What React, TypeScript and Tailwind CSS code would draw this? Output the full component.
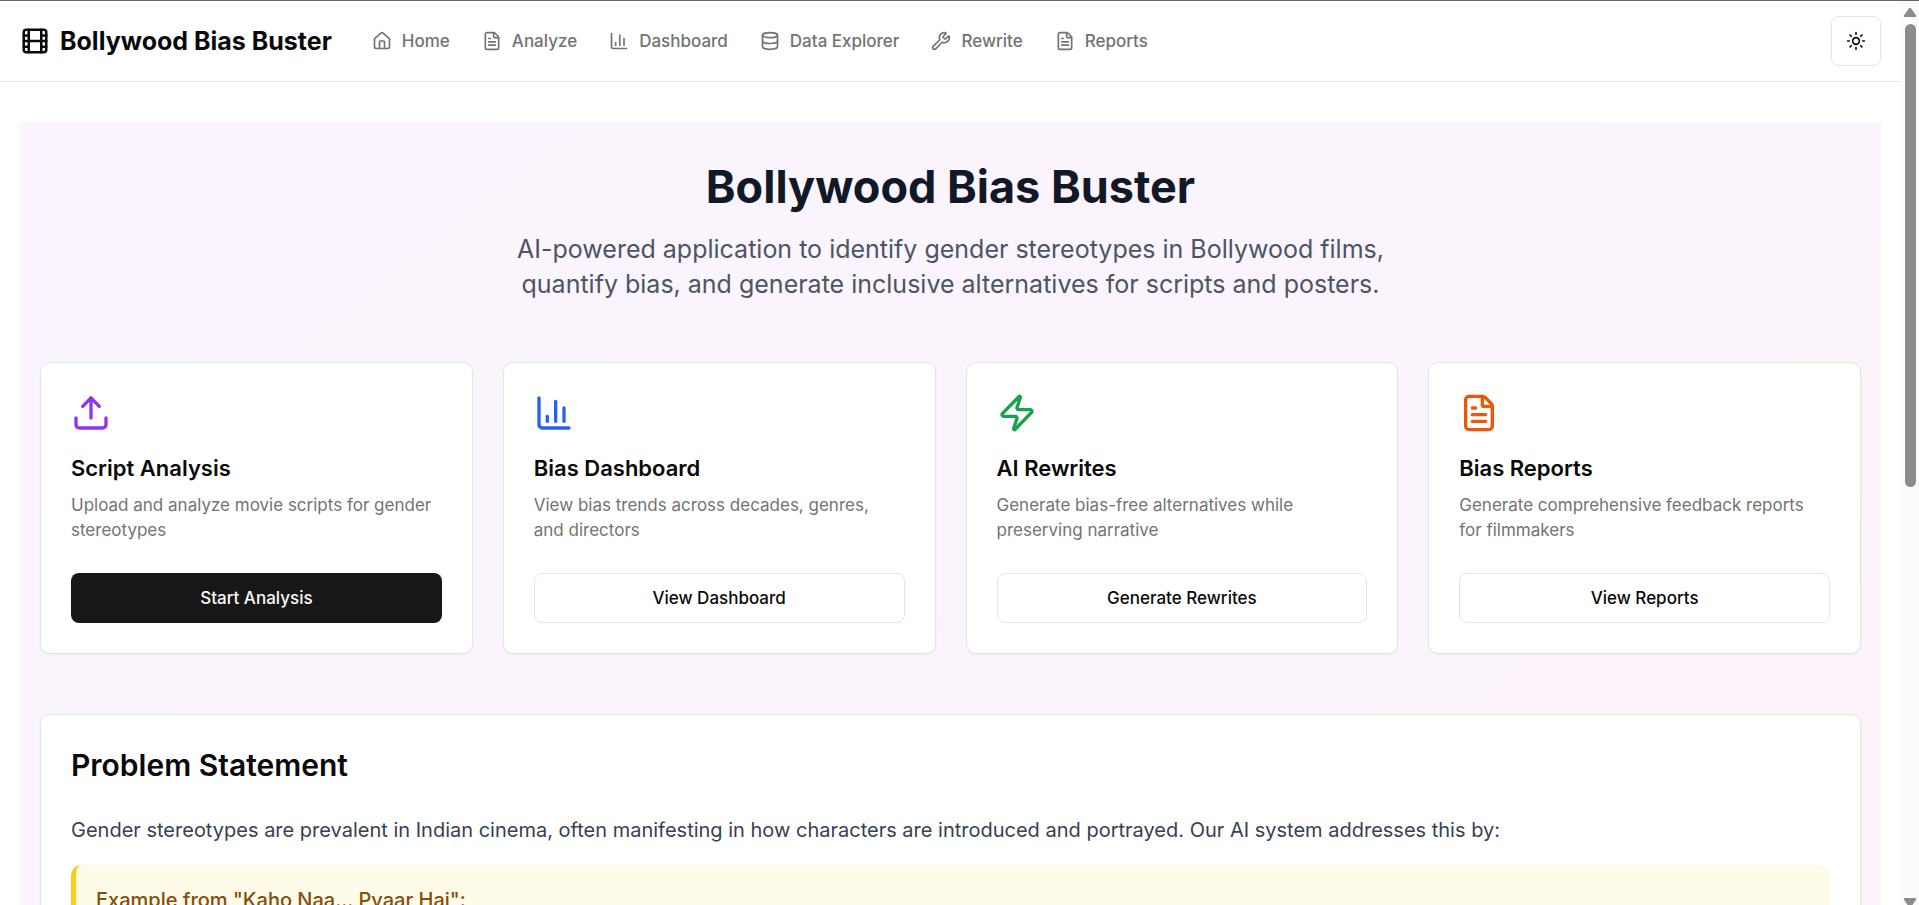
import {
  ChartColumn,
  Database,
  FileText,
  Film,
  House,
  Sun,
  Upload,
  Wrench,
  Zap,
  type LucideIcon,
} from "lucide-react";

type NavItem = { label: string; href: string; icon: LucideIcon };

const navItems: NavItem[] = [
  { label: "Home", href: "#home", icon: House },
  { label: "Analyze", href: "#analyze", icon: FileText },
  { label: "Dashboard", href: "#dashboard", icon: ChartColumn },
  { label: "Data Explorer", href: "#data", icon: Database },
  { label: "Rewrite", href: "#rewrite", icon: Wrench },
  { label: "Reports", href: "#reports", icon: FileText },
];

type Feature = {
  title: string;
  description: string;
  action: string;
  icon: LucideIcon;
  iconColor: string;
  primary?: boolean;
};

const features: Feature[] = [
  {
    title: "Script Analysis",
    description: "Upload and analyze movie scripts for gender stereotypes",
    action: "Start Analysis",
    icon: Upload,
    iconColor: "text-[#9333ea]",
    primary: true,
  },
  {
    title: "Bias Dashboard",
    description: "View bias trends across decades, genres, and directors",
    action: "View Dashboard",
    icon: ChartColumn,
    iconColor: "text-[#2563eb]",
  },
  {
    title: "AI Rewrites",
    description: "Generate bias-free alternatives while preserving narrative",
    action: "Generate Rewrites",
    icon: Zap,
    iconColor: "text-[#16a34a]",
  },
  {
    title: "Bias Reports",
    description: "Generate comprehensive feedback reports for filmmakers",
    action: "View Reports",
    icon: FileText,
    iconColor: "text-[#ea580c]",
  },
];

function Header() {
  return (
    <header className="flex h-[81px] shrink-0 items-center justify-between border-b border-[#e5e5e5] px-5">
      <div className="flex items-center gap-10">
        <a href="#home" className="flex items-center gap-2.5">
          <Film className="size-[30px]" />
          <span className="text-[25px] leading-[35px] font-bold">Bollywood Bias Buster</span>
        </a>
        <nav className="flex items-center gap-8">
          {navItems.map(({ label, href, icon: Icon }) => (
            <a
              key={label}
              href={href}
              className="flex items-center gap-2.5 text-[17px] leading-[25px] font-medium text-[#737373]"
            >
              <Icon className="size-5" />
              {label}
            </a>
          ))}
        </nav>
      </div>
      <button
        type="button"
        aria-label="Toggle theme"
        className="flex size-[50px] items-center justify-center rounded-lg border border-[#e5e5e5] bg-white"
      >
        <Sun className="size-5" />
      </button>
    </header>
  );
}

function FeatureCard({ feature }: { feature: Feature }) {
  const Icon = feature.icon;
  return (
    <article className="flex flex-col rounded-[10px] border border-[#e5e5e5] bg-white p-[30px] shadow-xs">
      <Icon className={`size-10 ${feature.iconColor}`} />
      <h3 className="mt-[18px] text-[22px] leading-[35px] font-semibold">{feature.title}</h3>
      <p className="mt-[7px] pr-2 text-[17px] leading-[25px] text-[#737373]">
        {feature.description}
      </p>
      <button
        type="button"
        className={
          feature.primary
            ? "mt-[30px] h-[50px] w-full rounded-lg bg-[#171717] text-[17px] leading-[25px] font-medium text-[#fafafa]"
            : "mt-[30px] h-[50px] w-full rounded-lg border border-[#e5e5e5] bg-white text-[17px] leading-[25px] font-medium"
        }
      >
        {feature.action}
      </button>
    </article>
  );
}

function ProblemStatement() {
  return (
    <section className="mt-[60px] rounded-[10px] border border-[#e5e5e5] bg-white p-[30px] shadow-xs">
      <h2 className="text-[30px] leading-10 font-semibold">Problem Statement</h2>
      <p className="mt-[30px] text-[20px] leading-[30px] text-[#374151]">
        Gender stereotypes are prevalent in Indian cinema, often manifesting in how characters are
        introduced and portrayed. Our AI system addresses this by:
      </p>
      <div className="mt-5 rounded-[10px] border-l-[5px] border-[#facc15] bg-[#fefce8] p-5">
        <p className="text-[20px] leading-[30px] font-medium text-[#854d0e]">
          Example from "Kaho Naa... Pyaar Hai":
        </p>
      </div>
    </section>
  );
}

function Scrollbar() {
  return (
    <div
      aria-hidden="true"
      className="flex w-[18px] shrink-0 flex-col items-center justify-between bg-[#fcfcfc] pt-1.5 text-[#8b8b8b]"
    >
      <svg width="14" height="11" viewBox="0 0 14 11" fill="currentColor">
        <path d="M5.8 1.6a1.5 1.5 0 0 1 2.4 0l4.6 6.4c.7 1 .2 2-.9 2H2.1C1 10 .5 9 1.2 8z" />
      </svg>
      <div className="mt-1.5 mb-auto h-[54%] max-h-[463px] w-[11px] rounded-full bg-current" />
      <svg width="14" height="8" viewBox="0 0 14 8" fill="currentColor">
        <path d="M2.1 1h9.8c1.1 0 1.6 1 .9 2L9.4 8H4.6L1.2 3C.5 2 1 1 2.1 1z" />
      </svg>
    </div>
  );
}

export default function App() {
  return (
    <div className="flex h-screen overflow-hidden border-t border-[#666666] bg-white font-['Inter',sans-serif] text-[#0a0a0a]">
      <div className="flex min-w-0 flex-1 flex-col overflow-hidden">
        <Header />
        <main className="px-5 py-10">
          <div className="min-h-[1513px] bg-linear-to-br from-[#faf5ff] to-[#fdf2f8] px-5 py-10">
            <div className="text-center">
              <h1 className="text-[45px] leading-[50px] font-bold text-[#111827]">
                Bollywood Bias Buster
              </h1>
              <p className="mx-auto mt-5 max-w-[960px] text-[25px] leading-[35px] text-[#4b5563]">
                AI-powered application to identify gender stereotypes in Bollywood films, quantify
                bias, and generate inclusive alternatives for scripts and posters.
              </p>
            </div>
            <div className="mt-[60px] grid grid-cols-4 gap-[30px]">
              {features.map((feature) => (
                <FeatureCard key={feature.title} feature={feature} />
              ))}
            </div>
            <ProblemStatement />
          </div>
        </main>
      </div>
      <Scrollbar />
    </div>
  );
}
